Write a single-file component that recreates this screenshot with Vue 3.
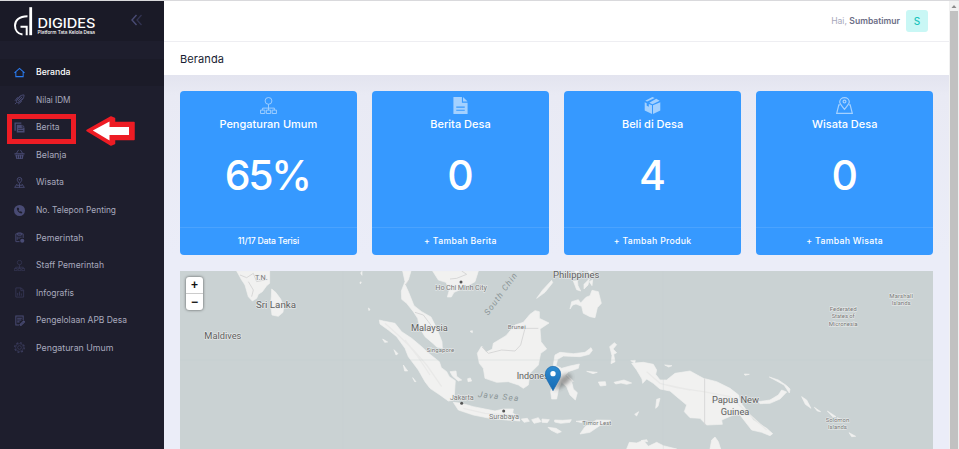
<script setup>
const menu = [
  { id: 'home', label: 'Beranda', w: 34.5 },
  { id: 'rocket', label: 'Nilai IDM', w: 34.5 },
  { id: 'copy', label: 'Berita', w: 23.5 },
  { id: 'basket', label: 'Belanja', w: 30.5 },
  { id: 'place', label: 'Wisata', w: 28 },
  { id: 'phone', label: 'No. Telepon Penting', w: 80 },
  { id: 'clipboard', label: 'Pemerintah', w: 47.5 },
  { id: 'tree', label: 'Staff Pemerintah', w: 68 },
  { id: 'chart', label: 'Infografis', w: 38 },
  { id: 'edit', label: 'Pengelolaan APB Desa', w: 91 },
  { id: 'gear', label: 'Pengaturan Umum', w: 77.5 },
]
const cards = [
  { icon: 'tree', title: 'Pengaturan Umum', value: '65%', foot: '11/17 Data Terisi' },
  { icon: 'doc', title: 'Berita Desa', value: '0', foot: '+ Tambah Berita' },
  { icon: 'box', title: 'Beli di Desa', value: '4', foot: '+ Tambah Produk' },
  { icon: 'map', title: 'Wisata Desa', value: '0', foot: '+ Tambah Wisata' },
]
const land = [
  'M-580 18L-565 45L-555 60L-545 95L-533 108L-520 100L-515 88L-503 80L-490 62L-481 55V18Z',
  'M-475 72L-463 82L-448 102L-439 125L-441 142L-455 154L-474 150L-478 120L-476 95Z',
  'M-82 18L-75 50L-86 78L-85 103L-70 115L-50 140L-37 160L-30 190L-15 215L10 236L20 246L37 250L36 230L20 190L3 156L-25 140L-48 122L-64 82L-74 60L-65 45L-57 18Z',
  'M8 18L25 45L48 52L58 75L52 96L64 96L72 82L100 70L135 50L145 18Z',
  'M-152 165L-140 168L-105 175L-85 200L-55 220L-25 245L0 268L28 290L34 308L50 320L58 335L76 347L72 405L55 408L30 390L0 370L-15 350L-35 315L-65 275L-75 250L-100 215L-125 195L-150 177Z',
  'M142 265L155 243L168 262L187 252L190 235L228 212L255 180L280 172L300 148L315 137L328 140L328 160L357 174L330 192L333 230L350 252L332 265L325 300L300 325L295 360L280 370L265 360L235 350L200 352L165 340L160 310L148 295Z',
  'M375 270L390 262L430 266L465 262L483 248L487 256L478 268L450 275L400 273L383 283L378 302L395 310L420 303L448 297L445 310L415 320L405 332L425 350L430 372L442 383L436 405L420 390L410 365L395 352L386 370L380 402L365 402L362 380L370 350L365 330Z',
  'M70 412L95 415L130 425L165 432L195 438L220 432L250 432L248 444L265 455L270 468L230 465L180 460L130 450L85 435Z',
  'M274 462L292 460L298 469L282 472ZM305 464L325 458L333 470L312 475ZM336 462L358 464L352 473L336 472ZM374 465L398 466L424 464L420 472L392 475L374 471ZM438 469L458 467L455 473Z',
  'M354 487L378 490L394 500L382 505L362 495ZM450 507L465 485L500 465L542 466L512 480L480 502Z',
  'M605 295L640 292L670 298L680 315L677 328L690 345L710 345L735 325L780 318L820 340L860 350L900 370L926 390L930 410L945 430L970 465L1010 490L1028 506L1020 512L995 502L965 495L930 450L910 450L875 465L877 478L830 480L810 460L780 458L763 440L770 420L740 395L720 378L690 372L670 355L650 342L638 355L636 342L620 315Z',
  'M590 552L598 532L620 534L640 526L655 544L680 532L700 542L740 552ZM840 552L845 525L855 516L865 530L872 552Z',
  'M985 410L1020 405L1045 390L1055 375L1070 381L1050 402L1020 415L990 416ZM1018 336L1045 345L1070 362L1080 372L1078 384L1062 360ZM1115 395L1130 405L1143 430L1126 418ZM1153 427L1172 440L1162 438ZM1192 438L1218 455L1208 455ZM1222 458L1240 466L1234 469ZM1257 503L1277 514L1265 515ZM943 327L958 328L945 331Z',
  'M420 132L425 110L445 104L452 114L468 97L480 92L486 76L505 80L514 115L502 128L495 158L480 155L460 145L455 124L438 117L428 120Z',
  'M320 100L338 75L365 46L368 53L345 82ZM430 48L442 47L444 62L452 78L440 74ZM462 58L478 42L474 60L462 72ZM478 50L488 44L486 62ZM434 18L446 18L441 28ZM474 18L488 20L482 30Z',
  'M539 245L553 233L560 239L549 252L560 263L551 268L555 290L543 296L546 272ZM505 351L526 350L528 361L511 363ZM552 352L582 345L605 354L590 358L573 354L557 357ZM680 403L690 400L684 424L677 430ZM614 448L626 440L620 453ZM470 319L502 322L489 326ZM633 527L650 524L653 530ZM602 287L616 286L614 294ZM704 300L726 302L716 306Z',
  'M-142 222L-127 231L-136 232ZM-108 254L-96 266L-102 270ZM-80 300L-67 318L-76 318ZM-52 338L-42 350L-46 350ZM60 320L78 318L80 334L95 345L85 348L68 334ZM113 341L121 339L125 348L114 350ZM120 199L127 197L127 203ZM-208 24L-204 19L-204 31ZM-210 51L-206 51L-209 57ZM-185 129L-180 133L-183 137Z',
]
const towns = [[93, 51], [95, 415], [221, 438]]
</script>

<template>
  <div class="page">
    <svg class="defs" aria-hidden="true">
      <symbol id="home" viewBox="0 0 24 24"><path d="M4 11v10h16V11M1 13L12 3l11 10" fill="none" stroke="currentColor" stroke-width="2.200" /></symbol>
      <symbol id="rocket" viewBox="0 0 24 24"><path d="M22 2c-7 0-11 3-15 10l-2 4 3 3 4-2c7-4 10-8 10-15z" fill="none" stroke="currentColor" stroke-width="2" /><path d="M18 6L9 15M15 5L6 14M19 9l-9 9M2 15l6-8M9 22l8-6M2 22l4-4" stroke="currentColor" stroke-width="2" /></symbol>
      <symbol id="copy" viewBox="0 0 24 24"><path fill-rule="evenodd" d="M1 1h15v3H4v15H1zM6 6h11v6h6v11H6zM18.500 6l4.500 4.500h-4.500zM9 14v1.500h11V14zM9 18v1.500h11V18z" fill="currentColor" /></symbol>
      <symbol id="basket" viewBox="0 0 24 24"><path d="M5 10l5-8M19 10l-5-8" stroke="currentColor" stroke-width="2" /><path fill-rule="evenodd" d="M1 9h22v3H1zM3 13h18l-2 9H5zM7 14v6h1.500v-6zM11.300 14v6h1.500v-6zM15.500 14v6H17v-6z" fill="currentColor" /></symbol>
      <symbol id="place" viewBox="0 0 24 24"><path d="M12 14C8 9 7 8 7 6a5 5 0 0110 0c0 2-1 3-5 8zM7 15L1 23M17 15l6 8M12 14v9M6 18h12M2 22.500h20" fill="none" stroke="currentColor" stroke-width="2" /><circle cx="12" cy="6" r="1.800" fill="currentColor" /></symbol>
      <symbol id="phone" viewBox="0 0 24 24"><path fill-rule="evenodd" d="M12 0a12 12 0 100 24 12 12 0 000-24zM8 5.500l2.500 1 .8 3.500-1.800 1.500 3 3.200 2-1.200 3.200 1.800.3 1.700-1.500 1.500C11 18 6 12 6.300 7z" fill="currentColor" /></symbol>
      <symbol id="clipboard" viewBox="0 0 24 24"><path d="M12 21H4V4h16v9M8 2h8v5H8zM7 10v7M11 10v5M15 10v3" fill="none" stroke="currentColor" stroke-width="2" /><circle cx="18" cy="19" r="4.500" fill="currentColor" /></symbol>
      <symbol id="tree" viewBox="0 0 24 24"><g fill="none" stroke="currentColor" stroke-width="1.300"><circle cx="12" cy="5.500" r="4.800" /><path d="M12 10.300v8M3.700 18.300v-2.600h16.600v2.600M.8 18.500h6V23.300h-6zM9 18.500h6V23.300H9zM17.200 18.500h6V23.300h-6z" /></g></symbol>
      <symbol id="chart" viewBox="0 0 24 24"><path d="M4 2h12l5 5v15H4zM15 2v6h6M8 19v-6M12 19v-9M16 19v-5" fill="none" stroke="currentColor" stroke-width="1.500" /></symbol>
      <symbol id="edit" viewBox="0 0 24 24"><path d="M11 22H4V2h16v9M7 7h10M7 11h9M7 15h5M13 21l8-8 2 2-8 8z" fill="none" stroke="currentColor" stroke-width="2.200" /></symbol>
      <symbol id="gear" viewBox="0 0 24 24"><g fill="none" stroke="currentColor"><circle cx="12" cy="12" r="10.500" stroke-width="2.500" stroke-dasharray="4.100 4.150" /><circle cx="12" cy="12" r="8.500" stroke-width="1.300" /><circle cx="12" cy="12" r="4" stroke-width="1.500" /></g></symbol>
      <symbol id="doc" viewBox="0 0 24 24"><path fill-rule="evenodd" d="M2 0h12v8h8v16H2zM6 13.500V15h12v-1.500zM6 18v1.500h12V18zM15.500 0L22 6.500h-6.500z" fill="currentColor" /></symbol>
      <symbol id="box" viewBox="0 0 24 24"><path d="M1 7.500l2.800 1.200v3.800l3 1.200V9.900l4.500 1.900V24L1 19zM23 7.500l-10.300 4.300V24L23 19zM11.800 0l3.300 1.500L4.500 6.500 1.800 5.300zM17.200 2.500l5 2.800L12 10.300 7.500 8.200z" fill="currentColor" /></symbol>
      <symbol id="map" viewBox="0 0 24 24"><g fill="none" stroke="currentColor" stroke-width="1.700"><path d="M12 17.500C6.500 11 5.200 9.500 5.200 7.200a6.800 6.300 0 0113.600 0c0 2.300-1.300 3.800-6.800 10.300zM5.500 11H4L1 23h22l-3-12h-1.500" /><circle cx="12" cy="6.500" r="2" /></g></symbol>
    </svg>

    <aside class="sidebar">
      <div class="brand">
        <svg class="logo" viewBox="0 0 90 36" role="img" aria-label="DIGIDES">
          <path d="M17.500 12.300C9 12.300 5 16.500 5 21.500C5 26.500 8 30 12.500 30.600M10.500 22.800H16.700V31.200" fill="none" stroke="#fff" stroke-width="2" />
          <path d="M20.700 3.200V31.200" stroke="#fff" stroke-width="2.800" />
          <text x="27.500" y="24.300" class="word" textLength="58" lengthAdjust="spacingAndGlyphs">DIGIDES</text>
          <text x="27.500" y="30.300" class="tag" textLength="57.500" lengthAdjust="spacingAndGlyphs">Platform Tata Kelola Desa</text>
        </svg>
        <svg class="collapse" viewBox="0 0 12 12" fill="none"><path d="M5.500 1L1 6l4.500 5" stroke="#494b74" stroke-width="1.400" /><path d="M10.500 1L6 6l4.500 5" stroke="#323350" stroke-width="1.300" /></svg>
      </div>
      <nav class="menu">
        <a v-for="(m, i) in menu" :key="m.id" class="item" :class="{ active: i === 0, dim: ['tree', 'chart', 'gear'].includes(m.id) }">
          <svg class="icon"><use :href="'#' + m.id" /></svg>
          <svg class="label" height="14" :width="m.w + 2"><text x="0" y="10" :textLength="m.w" lengthAdjust="spacingAndGlyphs">{{ m.label }}</text></svg>
        </a>
      </nav>
      <div class="highlight"></div>
      <svg class="arrow" viewBox="0 0 50 36"><path d="M2 18.500L26 5 29.500 6.500V10.500H49V27.500H29.500V31.500L26 33z" class="edge" /><path d="M7.800 18.500L24.500 9.500V15H44V23H24.500V28.500z" class="fill" /></svg>
    </aside>

    <main class="main">
      <header class="topbar"><span class="hello">Hai, <b>Sumbatimur</b></span><span class="avatar">S</span></header>
      <h1 class="title">Beranda</h1>
      <div class="content">
        <section class="cards">
          <article v-for="c in cards" :key="c.title" class="card">
            <svg class="cicon"><use :href="'#' + c.icon" /></svg>
            <h2>{{ c.title }}</h2>
            <div class="value">{{ c.value }}</div>
            <footer>{{ c.foot }}</footer>
          </article>
        </section>
        <section class="mapbox">
          <svg class="mapsvg" viewBox="-750 18 2259 534" preserveAspectRatio="none">
            <defs>
              <linearGradient id="pin" x2="0" y2="1"><stop stop-color="#2e8bd0" /><stop offset="1" stop-color="#166ab4" /></linearGradient>
              <filter id="soft" x="-50%" y="-50%" width="200%" height="200%"><feGaussianBlur stdDeviation="6" /></filter>
            </defs>
            <path v-for="(d, i) in land" :key="i" :d="d" class="land" />
            <g class="relief">
              <path d="M-135 175L-90 215L-50 255L-10 300L35 365M-75 225L-40 270L0 330M100 430L165 445L240 450M650 320L690 355L740 368L820 380L900 395L960 450L1010 495M710 360L780 375M410 330L430 350" />
            </g>
            <g class="border">
              <path d="M-570 30L-550 38L-530 25L-520 50L-495 45M-545 50L-530 75L-535 95M155 245L175 265L215 255L255 258L272 240L285 190H325M824 340V480M95 18L110 28L80 40L60 42M-45 142L-20 150L-5 170L10 190M-75 60L-62 45" />
            </g>
            <path d="M-750 285H1509M-260 18V552M700 18V552" class="seam" />
            <circle v-for="t in towns" :key="t[0]" :cx="t[0]" :cy="t[1]" r="4.500" fill="#555" />
            <g class="names">
              <g class="big">
                <text x="-522" y="129" textLength="120" lengthAdjust="spacingAndGlyphs">Sri Lanka</text>
                <text x="-677" y="223" textLength="111" lengthAdjust="spacingAndGlyphs">Maldives</text>
                <text x="-57" y="197" textLength="110" lengthAdjust="spacingAndGlyphs">Malaysia</text>
                <text x="369" y="40" textLength="139" lengthAdjust="spacingAndGlyphs">Philippines</text>
                <text x="260" y="342" textLength="117" lengthAdjust="spacingAndGlyphs">Indonesia</text>
                <text x="846" y="414" textLength="141" lengthAdjust="spacingAndGlyphs">Papua New</text>
                <text x="872" y="449" textLength="86" lengthAdjust="spacingAndGlyphs">Guinea</text>
              </g>
              <g class="mid">
                <text x="-525" y="45" textLength="38">T.N.</text>
                <text x="16" y="76" textLength="155">Ho Chi Minh City</text>
                <text x="60" y="404" textLength="71">Jakarta</text>
                <text x="177" y="463" textLength="90">Surabaya</text>
              </g>
              <g class="small">
                <text x="-10" y="261" textLength="83">Singapore</text>
                <text x="233" y="192" textLength="54">Brunei</text>
                <text x="457" y="479" textLength="87">Timor Lest</text>
                <text x="1199" y="137" textLength="81">Federated</text>
                <text x="1205" y="160" textLength="69">States of</text>
                <text x="1196" y="183" textLength="87">Micronesia</text>
                <text x="1378" y="98" textLength="71">Marshall</text>
                <text x="1385" y="120" textLength="57">Islands</text>
                <text x="1187" y="470" textLength="71">Solomon</text>
                <text x="1194" y="492" textLength="57">Islands</text>
              </g>
              <g class="sea">
                <text transform="translate(175 152) rotate(-54)" textLength="148">South Chin</text>
                <text transform="translate(143 396) rotate(6)" textLength="122">Java Sea</text>
              </g>
            </g>
            <path d="M372 374L392 335Q420 318 424 336Q420 358 372 376" fill="#333" opacity=".45" filter="url(#soft)" />
            <path d="M369 377L350 343Q346 335 346 327A23 23 0 01392 327Q392 335 388 343Z" fill="url(#pin)" stroke="#1b67a8" stroke-width="2" />
            <circle cx="369" cy="326" r="8" fill="#fff" />
          </svg>
          <div class="zoom"><span>+</span><span>−</span></div>
        </section>
      </div>
    </main>
    <div class="scroll"><svg class="up" viewBox="0 0 10 10"><path d="M2.500 7L5 4l2.500 3z" fill="#8b8b8b" /></svg><div class="thumb"></div></div>
  </div>
</template>

<style>
body { margin: 0; overflow: hidden; }
</style>
<style scoped>
.page { box-sizing: border-box; width: 959px; height: 449px; display: flex; border-top: 1px solid #d9d9dc; overflow: hidden; font-family: Inter, "Open Sans", sans-serif; background: #ebedf7; }
.defs { position: absolute; width: 0; height: 0; }
.sidebar { position: relative; width: 164px; flex: none; background: #1e1e2d; box-shadow: inset 0 1px #55555e; }
.brand { box-sizing: border-box; height: 40px; background: #1a1a27; display: flex; align-items: flex-start; padding: 3px 0 0 10px; }
.logo { width: 90px; height: 36px; }
.word { font: 500 13px Inter, sans-serif; fill: #fff; }
.tag { font: 500 4.500px Inter, sans-serif; fill: #fff; }
.collapse { width: 12px; height: 12px; margin: 10px 0 0 31px; }
.menu { padding-top: 17.500px; }
.item { height: 27.550px; display: flex; align-items: center; padding-left: 14px; gap: 11px; color: #494b74; }
.item.active { background: #1b1b28; color: #2a7bf0; }
.item.dim .icon { opacity: .7; }
.icon { width: 11px; height: 11px; }
.label { font: 400 8.500px Inter, sans-serif; fill: #a8a9bd; }
.active .label { fill: #fff; font-weight: 500; }
.highlight { position: absolute; box-sizing: border-box; left: 7px; top: 113px; width: 69px; height: 30px; border: 5px solid #ed1c24; }
.arrow { position: absolute; left: 85px; top: 111px; width: 50px; height: 36px; }
.edge { fill: #ed1c24; stroke: #ed1c24; stroke-width: 1.500; stroke-linejoin: round; }
.fill { fill: #fff; }
.main { flex: 1; min-width: 0; display: flex; flex-direction: column; }
.topbar { box-sizing: border-box; height: 41px; flex: none; background: #fff; border-bottom: 1px solid #eeeef2; display: flex; justify-content: flex-end; align-items: center; padding-right: 21px; gap: 6px; }
.hello { font-size: 8.600px; font-weight: 400; color: #a7a8bb; }
.hello b { font-weight: 600; color: #6c6e86; }
.avatar { width: 22px; height: 22px; border-radius: 3px; background: #c9f7f5; color: #1bc5bd; font-size: 10px; font-weight: 500; line-height: 22px; text-align: center; }
.title { margin: 0; height: 33px; flex: none; background: #fff; padding-left: 16px; line-height: 34px; font-size: 11px; font-weight: 400; letter-spacing: .1px; color: #181c32; }
.content { flex: 1; min-height: 0; padding: 16px 16px 0; background: linear-gradient(#e3e4ef, #e9eaf4 20px, #ebedf8 180px); display: flex; flex-direction: column; gap: 16px; }
.cards { display: grid; grid-template-columns: repeat(4, 1fr); gap: 15.500px; height: 164px; flex: none; }
.card { background: #3699ff; border-radius: 4px; color: #fff; display: flex; flex-direction: column; align-items: center; overflow: hidden; }
.cicon { width: 17px; height: 17px; margin-top: 6px; flex: none; opacity: .55; }
.card h2 { margin: 2px 0 0; font-size: 11px; line-height: 16px; font-weight: 500; }
.value { font-size: 41px; font-weight: 500; line-height: 50px; margin-top: 18px; letter-spacing: -2.400px; padding-right: 0; text-indent: -2.400px; }
.card footer { margin-top: auto; width: 100%; box-sizing: border-box; height: 28px; border-top: 1px solid #4aa3ff; text-align: center; line-height: 27px; font-size: 8.700px; font-weight: 500; }
.card + .card footer { letter-spacing: .3px; }
.card:first-child footer { letter-spacing: -.250px; }
.mapbox { position: relative; flex: 1; background: #cad2d3; overflow: hidden; }
.mapsvg { display: block; width: 753px; height: 178px; }
.land { fill: #f1f1f0; stroke: #f1f1f0; stroke-width: 2; stroke-linejoin: round; }
.border { fill: none; stroke: #d2d2d2; stroke-width: 2.500; }
.relief { fill: none; stroke: #e9e9e8; stroke-width: 4; }
.seam { fill: none; stroke: #c6cfd0; stroke-width: 1; }
.names { font-family: Roboto, sans-serif; fill: #6b6b6b; stroke: #eceeee; stroke-width: 4; stroke-opacity: .75; paint-order: stroke; stroke-linejoin: round; }
.big { font-size: 28px; font-weight: 400; fill: #606060; }
.mid { font-size: 22px; fill: #7c7c7c; }
.small { font-size: 18.500px; fill: #777; }
.sea { font-size: 25px; font-style: italic; fill: #8b9597; stroke: none; }
.zoom { position: absolute; left: 6px; top: 6px; width: 17px; height: 33px; border-radius: 3px; background: #fff; box-shadow: 0 0 3px #0009; display: flex; flex-direction: column; }
.zoom span { flex: 1; text-align: center; font: bold 12px/16px "Liberation Sans", sans-serif; color: #111; }
.zoom span + span { border-top: 1px solid #ccc; }
.scroll { width: 10px; flex: none; background: #f1f1f1; display: flex; flex-direction: column; }
.up { width: 10px; height: 10px; flex: none; }
.thumb { flex: 1; margin: 0 1px; background: #c1c1c1; }
</style>
